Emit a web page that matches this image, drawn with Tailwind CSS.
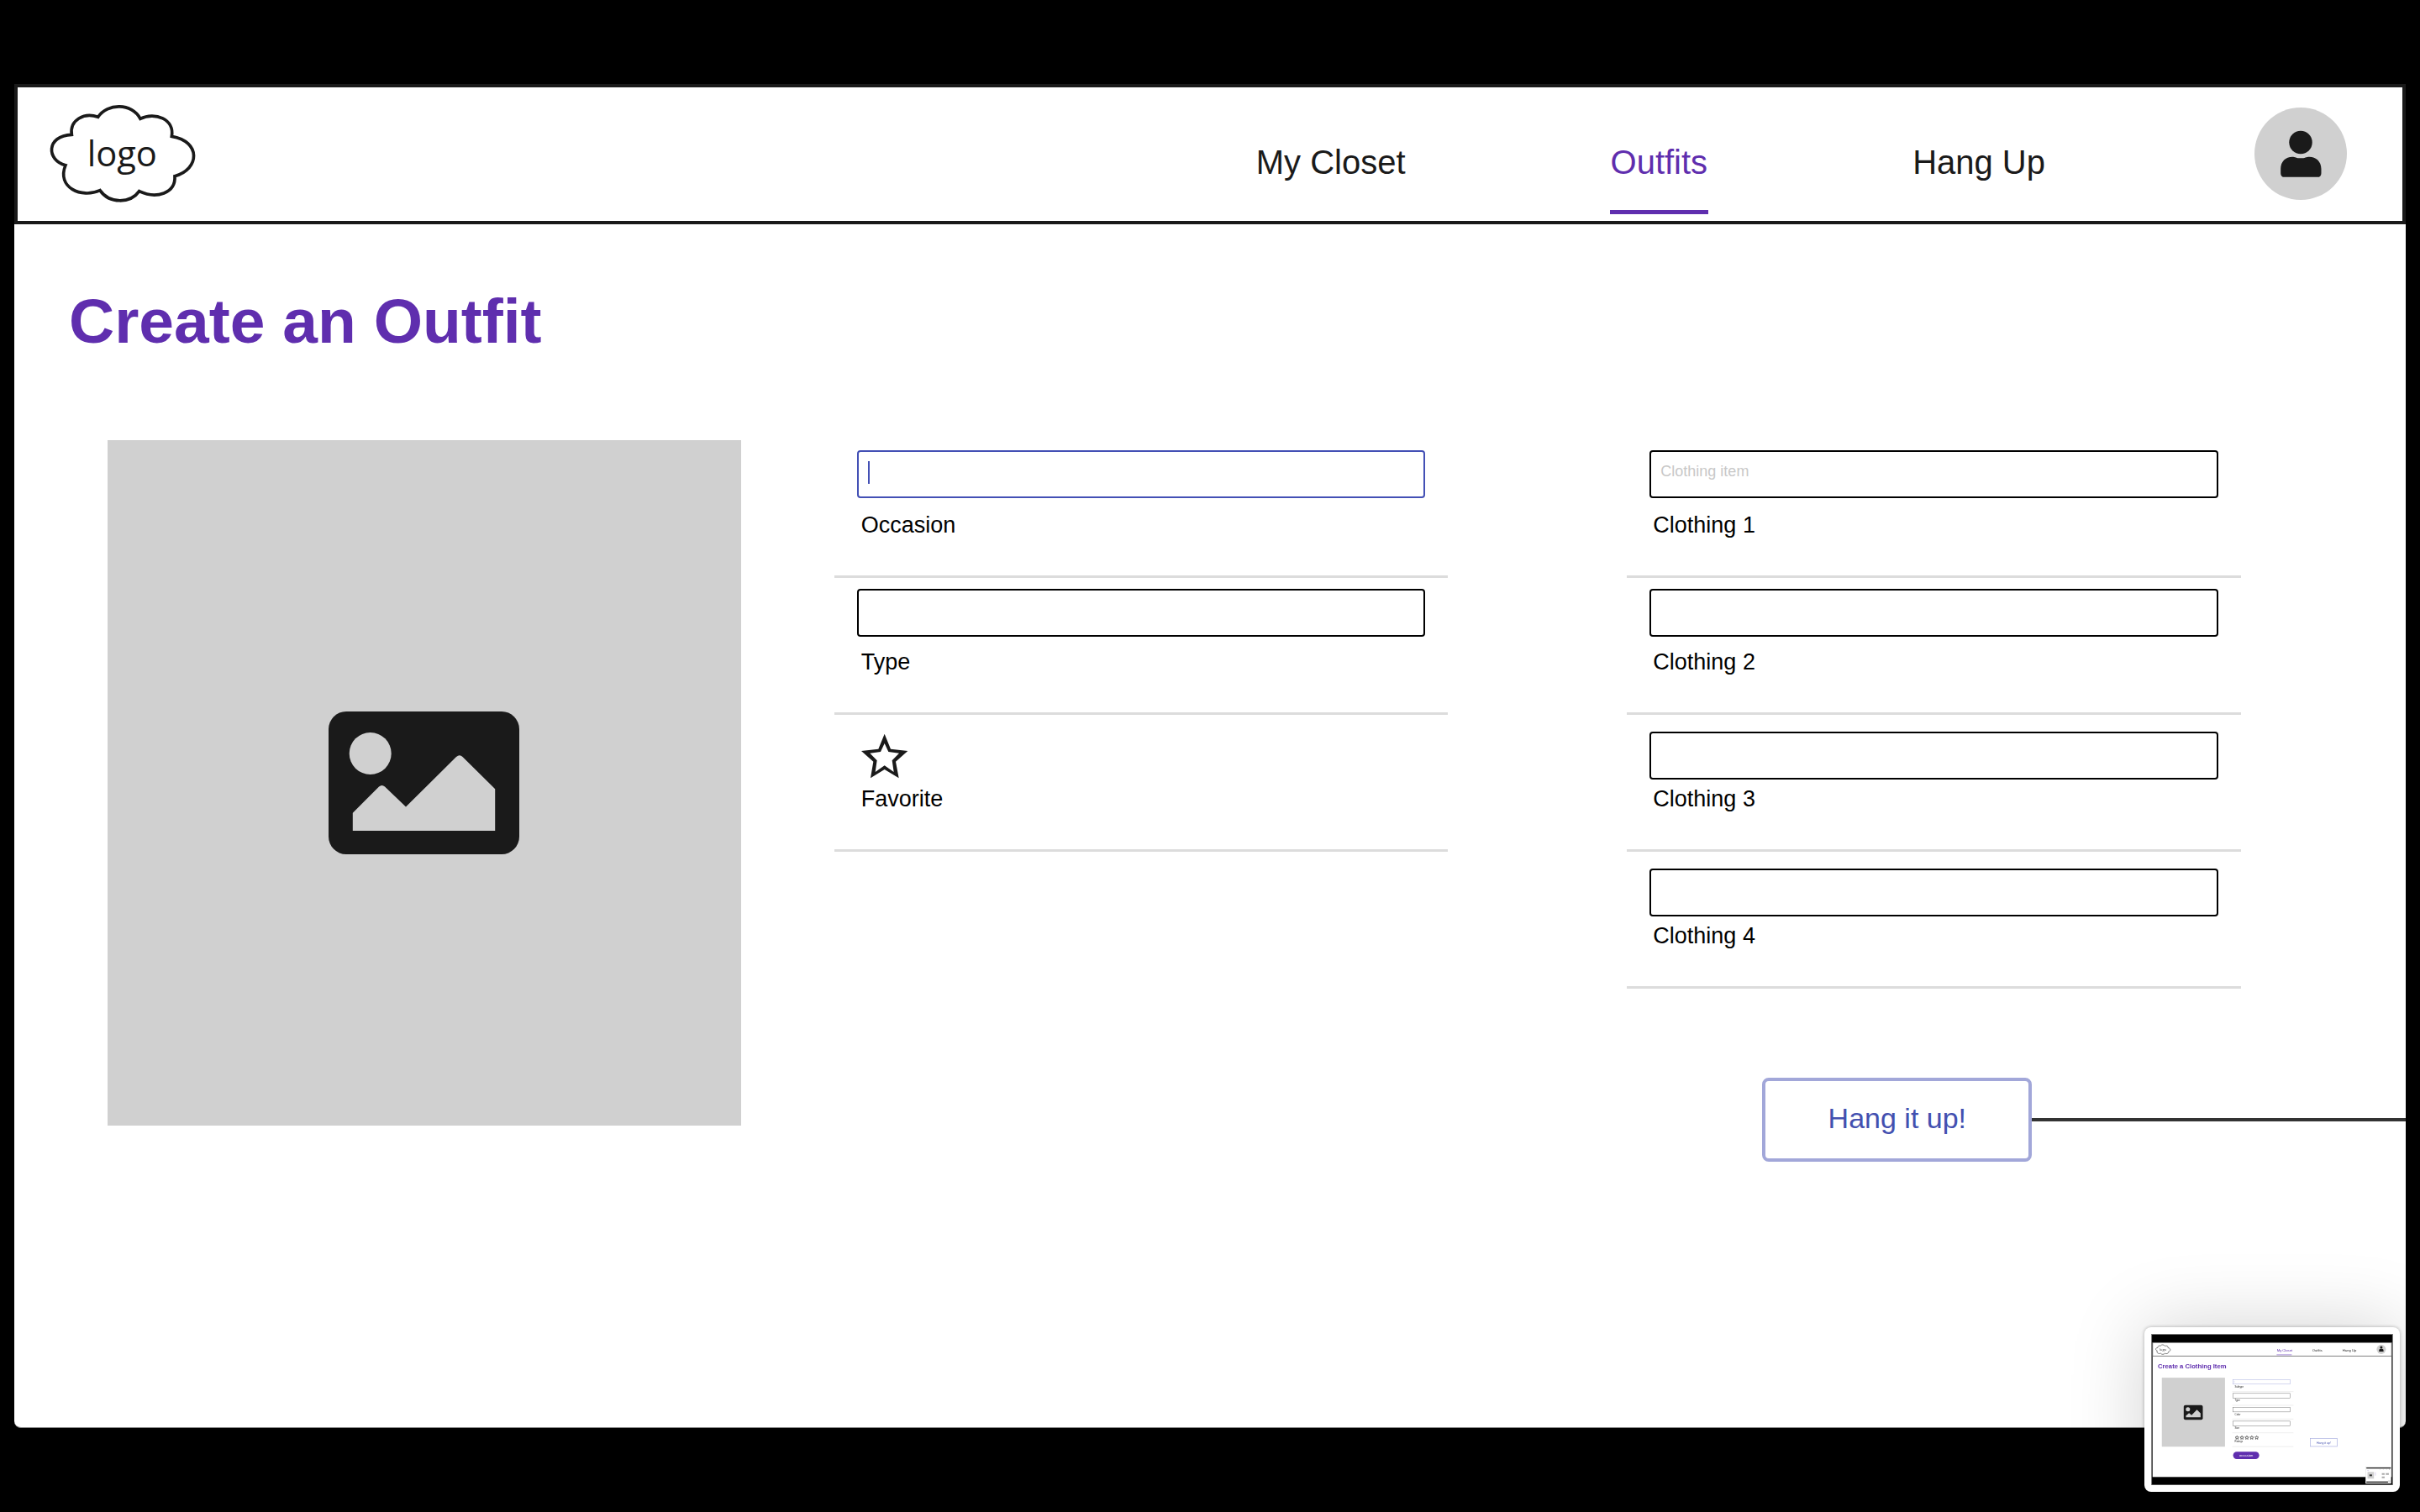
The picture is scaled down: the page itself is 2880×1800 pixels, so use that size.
<!DOCTYPE html>
<html lang="en">
<head>
<meta charset="utf-8">
<title>Create an Outfit</title>
<script src="https://cdn.jsdelivr.net/npm/@tailwindcss/browser@4"></script>
</head>
<body class="flex min-h-screen flex-col bg-black px-[17px] py-[100px] font-['Liberation_Sans',Arial,sans-serif] text-black">

<div class="flex flex-1 flex-col rounded-b-lg border-b border-[#888888] bg-white">
  <header class="flex items-start justify-between border-4 border-[#1a1a1a] pl-[36px] pr-[66px]">
    <a href="#" class="mt-[18px] block" aria-label="Home">
      <svg class="h-[122px] w-[180px]" viewBox="50 36 540 366">
        <path d="M229 88C262 37 350 37 380 94C432 68 503 95 492 157C598 175 592 275 503 299C507 360 438 382 376 353C345 397 270 399 236 350C170 380 80 340 113 260C45 243 42 155 135 151C127 98 180 70 229 88Z" fill="#fff" stroke="#1a1a1a" stroke-width="11"/>
        <text x="190" y="265" font-family="Open Sans, sans-serif" font-size="125" fill="#1a1a1a">logo</text>
      </svg>
    </a>
    <div class="flex items-start">
      <nav class="mr-[249px] mt-[65px] flex gap-[243px] pb-2 text-[40px] leading-[48px] text-[#1a1a1a]">
        <a href="#" class="border-b-[5px] border-transparent pb-[33px]">My Closet</a>
        <a href="#" aria-current="page" class="border-b-[5px] border-[#5f2eae] px-px pb-[33px] text-[#5f2eae]">Outfits</a>
        <a href="#" class="border-b-[5px] border-transparent pb-[33px]">Hang Up</a>
      </nav>
      <button type="button" class="mt-[24px] size-[110px] rounded-full bg-[#d0d0d0]" aria-label="Account">
        <svg class="size-full" viewBox="132 114 328 328" fill="#1a1a1a">
          <circle cx="296" cy="238" r="41"/>
          <path d="M225 347V332C225 305 243 289 266 289C276 289 281 294 296 294C311 294 316 289 327 289C350 289 369 305 369 332V347Q369 361 355 361H239Q225 361 225 347Z"/>
        </svg>
      </button>
    </div>
  </header>

  <main>
    <h1 class="pl-[65px] pt-[75px] text-[75px] leading-[80px] font-bold text-[#5f2eae]">Create an Outfit</h1>

    <form class="mt-[102px] flex items-start pl-[111px]">
      <div class="flex h-[816px] flex-[754] items-center justify-center bg-[#d0d0d0]">
        <svg class="h-[170px] w-[227px]" viewBox="0 0 227 170" role="img" aria-label="Outfit photo">
          <rect width="227" height="170" rx="21" fill="#1a1a1a"/>
          <circle cx="49.7" cy="50" r="25" fill="#d0d0d0"/>
          <path d="M28.8 142V120.7L60 89.5Q63.5 86.5 67 89.5L92 113.5L152 54Q156 50.5 159.5 54L198.2 92.2V142Z" fill="#d0d0d0"/>
        </svg>
      </div>

      <div class="ml-[111px] flex-[731] pt-px">
        <div class="border-b-[3px] border-[#dcdcdc] px-[27px] pb-[44px]">
          <div class="relative h-[84px] pt-[11px]">
            <input id="occasion" type="text" class="block h-[57px] w-full rounded-[4px] border-2 border-[#4350b5] px-[11px] text-[18px] outline-none">
            <span class="absolute left-[13px] top-[24px] h-[27px] w-[2px] bg-[#4350b5]"></span>
          </div>
          <label for="occasion" class="block pl-[5px] text-[27px] leading-[32px]">Occasion</label>
        </div>
        <div class="border-b-[3px] border-[#dcdcdc] px-[27px] pb-[44px]">
          <div class="h-[84px] pt-[13px]">
            <input id="type" type="text" class="block h-[57px] w-full rounded-[4px] border-2 border-black px-[11px] text-[18px]">
          </div>
          <label for="type" class="block pl-[5px] text-[27px] leading-[32px]">Type</label>
        </div>
        <div class="border-b-[3px] border-[#dcdcdc] px-[27px] pb-[44px]">
          <div class="h-[84px] pl-[5px] pt-[22px]">
            <div class="relative size-[56px]">
              <input id="favorite" type="checkbox" class="absolute inset-0 size-full appearance-none">
              <svg class="pointer-events-none size-full" viewBox="45 38 168 168" fill="#1a1a1a" fill-rule="evenodd">
                <path d="M128 40L150 94L211 101L168 139L179 198L128 167L78 198L88 139L45 101L106 94ZM128 74L142 104L180 109L155 135L161 176L128 153L95 176L101 135L76 109L114 104Z"/>
              </svg>
            </div>
          </div>
          <label for="favorite" class="block pl-[5px] text-[27px] leading-[32px]">Favorite</label>
        </div>
      </div>

      <div class="ml-[213px] mr-[196px] flex-[731] pt-px">
        <div class="border-b-[3px] border-[#dcdcdc] px-[27px] pb-[44px]">
          <div class="h-[84px] pt-[11px]">
            <input id="clothing-1" type="text" placeholder="Clothing item" class="block h-[57px] w-full rounded-[4px] border-2 border-black px-[11px] pb-[6px] text-[18px] placeholder:text-[#c8c8c8]">
          </div>
          <label for="clothing-1" class="block pl-[4px] text-[27px] leading-[32px]">Clothing 1</label>
        </div>
        <div class="border-b-[3px] border-[#dcdcdc] px-[27px] pb-[44px]">
          <div class="h-[84px] pt-[13px]">
            <input id="clothing-2" type="text" class="block h-[57px] w-full rounded-[4px] border-2 border-black px-[11px] text-[18px]">
          </div>
          <label for="clothing-2" class="block pl-[4px] text-[27px] leading-[32px]">Clothing 2</label>
        </div>
        <div class="border-b-[3px] border-[#dcdcdc] px-[27px] pb-[44px]">
          <div class="h-[84px] pt-[20px]">
            <input id="clothing-3" type="text" class="block h-[57px] w-full rounded-[4px] border-2 border-black px-[11px] text-[18px]">
          </div>
          <label for="clothing-3" class="block pl-[4px] text-[27px] leading-[32px]">Clothing 3</label>
        </div>
        <div class="border-b-[3px] border-[#dcdcdc] px-[27px] pb-[44px]">
          <div class="h-[84px] pt-[20px]">
            <input id="clothing-4" type="text" class="block h-[57px] w-full rounded-[4px] border-2 border-black px-[11px] text-[18px]">
          </div>
          <label for="clothing-4" class="block pl-[4px] text-[27px] leading-[32px]">Clothing 4</label>
        </div>
        <div class="-mr-[196px] mt-[106px] flex items-center pl-[161px]">
          <button type="button" class="h-[100px] w-[321px] rounded-lg border-4 border-[#a2a7d9] pb-1 text-[34px] leading-[40px] text-[#4350b0]">Hang it up!</button>
          <div class="h-[4px] flex-1 bg-[#333333]"></div>
        </div>
      </div>
    </form>
  </main>
</div>

<!-- Floating preview of the clothing item page -->
<aside class="fixed bottom-[24px] right-[24px] rounded-[8px] bg-white p-[8px] shadow-[0_0_4px_rgba(0,0,0,0.3),0_0_90px_rgba(0,0,0,0.18)]">
  <svg class="h-[180px] w-[288px]" viewBox="91 84 862 539" font-family="Liberation Sans, Arial, sans-serif" role="img" aria-label="Create a Clothing Item preview">
    <rect x="91" y="84" width="862" height="539" fill="#777"/>
    <rect x="94" y="87" width="856" height="534" fill="#000"/>
    <rect x="96" y="115" width="852" height="479" fill="#fff"/>
    <path d="M96 115H948V163H96Z" fill="#fff" stroke="#444" stroke-width="2"/>
    <path transform="translate(101 117.500) scale(.102)" d="M229 88C262 37 350 37 380 94C432 68 503 95 492 157C598 175 592 275 503 299C507 360 438 382 376 353C345 397 270 399 236 350C170 380 80 340 113 260C45 243 42 155 135 151C127 98 180 70 229 88Z" fill="#fff" stroke="#333" stroke-width="18"/>
    <text x="120" y="145" font-family="Open Sans, sans-serif" font-size="13" fill="#333">logo</text>
    <g font-size="12.500" fill="#222">
      <text x="539" y="146" fill="#5f2eae">My Closet</text>
      <text x="665" y="146">Outfits</text>
      <text x="773" y="146">Hang Up</text>
    </g>
    <rect x="538" y="157" width="54" height="3" fill="#a98fd8"/>
    <circle cx="911" cy="139" r="16.500" fill="#d0d0d0"/>
    <circle cx="911" cy="132" r="4.500" fill="#1a1a1a"/>
    <path d="M903 147V143Q903 137 908 137H914Q919 137 919 143V147Z" fill="#1a1a1a"/>
    <text x="115" y="207" font-size="23" font-weight="bold" fill="#5f2eae">Create a Clothing Item</text>
    <rect x="129" y="240" width="225" height="246" fill="#d0d0d0"/>
    <rect x="207" y="338" width="68" height="52" rx="6" fill="#1a1a1a"/>
    <circle cx="222" cy="353" r="7.500" fill="#d0d0d0"/>
    <path d="M215 381V375L226 366L235 374L254 354L267 367V381Z" fill="#d0d0d0"/>
    <g fill="#fff" stroke="#777" stroke-width="1.500">
      <rect x="383" y="247" width="204" height="16" stroke="#a9afe0"/>
      <rect x="383" y="296" width="204" height="17"/>
      <rect x="383" y="346" width="204" height="16"/>
      <rect x="383" y="395" width="204" height="17"/>
    </g>
    <path d="M387 251V258" stroke="#a9afe0"/>
    <g font-size="8.500" fill="#222">
      <text x="389" y="275">Subtype</text>
      <text x="389" y="324">Type</text>
      <text x="389" y="373">Color</text>
      <text x="389" y="422">Size</text>
      <text x="389" y="470">Ratings</text>
    </g>
    <path d="M380 289.500H598M380 338.500H598M380 387.500H598M380 436.500H598M380 485.500H598" stroke="#e6e6e6" stroke-width="2"/>
    <g fill="none" stroke="#222" stroke-width="1.800">
      <path id="s" d="M397 447L399 451.500L403.500 452L400 455L401 459.500L397 457L393 459.500L394 455L390.500 452L395 451.500Z"/>
      <use href="#s" x="17.500"/><use href="#s" x="35"/><use href="#s" x="52.500"/><use href="#s" x="70"/>
    </g>
    <rect x="383" y="504" width="93" height="26" rx="13" fill="#5f2eae"/>
    <text x="429.500" y="521" font-size="12.500" text-anchor="middle" fill="#fff">occasion</text>
    <rect x="658" y="457" width="96" height="28" fill="#fff" stroke="#a9afe0" stroke-width="2"/>
    <text x="706" y="475" font-size="10.500" text-anchor="middle" fill="#4350b0">Hang it up!</text>
    <rect x="855" y="558" width="91" height="59" fill="#fff" stroke="#ccc"/>
    <rect x="858" y="560" width="87" height="4" fill="#222"/>
    <rect x="858" y="610" width="80" height="4" fill="#222"/>
    <rect x="862" y="576" width="23" height="24" fill="#d0d0d0"/>
    <rect x="869" y="585" width="9" height="6" fill="#333"/>
    <path d="M890 577V589M861 571H867" stroke="#b9a9dd" stroke-width="1.500"/>
    <path d="M905 567H908M917 567H920M929 567H932" stroke="#aaa"/>
    <circle cx="940" cy="566" r="1.500" fill="#888"/>
    <path d="M913 583H923M927 583H938M913 595H923" stroke="#aaa" stroke-width="6"/>
    <rect x="935" y="606" width="9" height="8" fill="#ddd"/>
  </svg>
</aside>

</body>
</html>
